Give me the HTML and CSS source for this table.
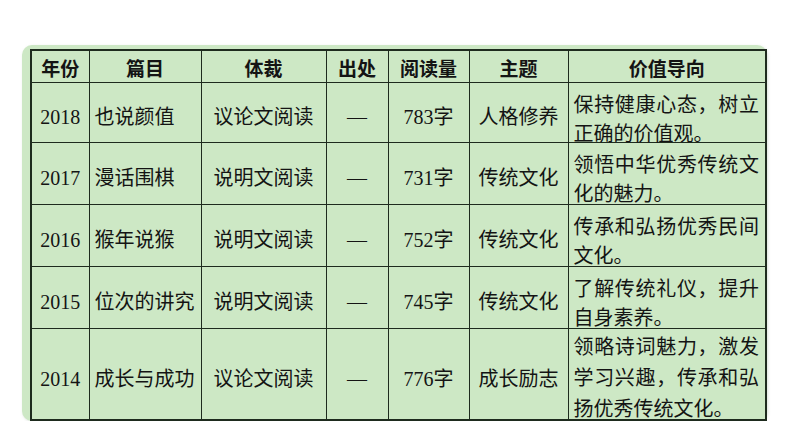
FILE: index.html
```html
<!DOCTYPE html>
<html lang="zh-CN">
<head>
<meta charset="utf-8">
<link rel="stylesheet" href="styles.css">
</head>
<body>
<div class="page">
  <div class="panel">
    <table class="grid">
      <colgroup>
        <col class="c1"><col class="c2"><col class="c3"><col class="c4"><col class="c5"><col class="c6"><col class="c7">
      </colgroup>
      <thead>
        <tr class="head">
          <th>年份</th><th>篇目</th><th>体裁</th><th>出处</th><th>阅读量</th><th>主题</th><th>价值导向</th>
        </tr>
      </thead>
      <tbody>
        <tr class="r1">
          <td class="ctr">2018</td><td class="lft">也说颜值</td><td class="ctr">议论文阅读</td><td class="ctr">—</td><td class="ctr">783字</td><td class="ctr">人格修养</td><td class="val"><div class="txt">保持健康心态，树立正确的价值观。</div></td>
        </tr>
        <tr class="r2">
          <td class="ctr">2017</td><td class="lft">漫话围棋</td><td class="ctr">说明文阅读</td><td class="ctr">—</td><td class="ctr">731字</td><td class="ctr">传统文化</td><td class="val"><div class="txt">领悟中华优秀传统文化的魅力。</div></td>
        </tr>
        <tr class="r2">
          <td class="ctr">2016</td><td class="lft">猴年说猴</td><td class="ctr">说明文阅读</td><td class="ctr">—</td><td class="ctr">752字</td><td class="ctr">传统文化</td><td class="val"><div class="txt">传承和弘扬优秀民间文化。</div></td>
        </tr>
        <tr class="r2">
          <td class="ctr">2015</td><td class="lft">位次的讲究</td><td class="ctr">说明文阅读</td><td class="ctr">—</td><td class="ctr">745字</td><td class="ctr">传统文化</td><td class="val"><div class="txt">了解传统礼仪，提升自身素养。</div></td>
        </tr>
        <tr class="r3">
          <td class="ctr">2014</td><td class="lft">成长与成功</td><td class="ctr">议论文阅读</td><td class="ctr">—</td><td class="ctr">776字</td><td class="ctr">成长励志</td><td class="val"><div class="txt tall">领略诗词魅力，激发学习兴趣，传承和弘扬优秀传统文化。</div></td>
        </tr>
      </tbody>
    </table>
  </div>
</div>
</body>
</html>
```

FILE: styles.css
```css
html, body {
  margin: 0;
  padding: 0;
  background: #ffffff;
}

.page {
  padding: 45px 0 0 22px;
}

.panel {
  width: 745px;
  height: 376px;
  box-sizing: border-box;
  padding: 4px 0 0 8px;
  background: #cde8c5;
  border-radius: 10px;
  box-shadow: 1px 1px 3px rgba(150, 170, 150, 0.35);
}

.grid {
  border-collapse: collapse;
  table-layout: fixed;
  width: 735px;
  border: 2px solid #1e2b1e;
  background: #cde8c5;
  font-family: "Liberation Serif", "Noto Sans CJK SC", serif;
  font-size: 20px;
  color: #141414;
}

.c1 { width: 58px; }
.c2 { width: 112px; }
.c3 { width: 125px; }
.c4 { width: 62px; }
.c5 { width: 81px; }
.c6 { width: 99px; }
.c7 { width: 198px; }

.grid th,
.grid td {
  border: 1.5px solid #1e2b1e;
  padding: 0;
  vertical-align: middle;
}

.head { height: 32px; }
.r1 { height: 60px; }
.r2 { height: 62px; }
.r3 { height: 92px; }

.head th {
  padding-top: 4px;
  font-family: "Noto Sans CJK SC", sans-serif;
  font-weight: 700;
  font-size: 19px;
  line-height: 24px;
  text-align: center;
}

.grid .ctr {
  text-align: center;
  line-height: 24px;
  padding-top: 10px;
}

.grid .lft {
  text-align: left;
  padding: 10px 0 0 5px;
  line-height: 24px;
}

.grid .val {
  vertical-align: top;
  padding: 0 6px 0 5px;
}

.txt {
  text-align: justify;
  height: 50px;
  padding-top: 8px;
  line-height: 29px;
}

.txt.tall {
  height: 84px;
  padding-top: 3px;
  line-height: 31px;
}
```
